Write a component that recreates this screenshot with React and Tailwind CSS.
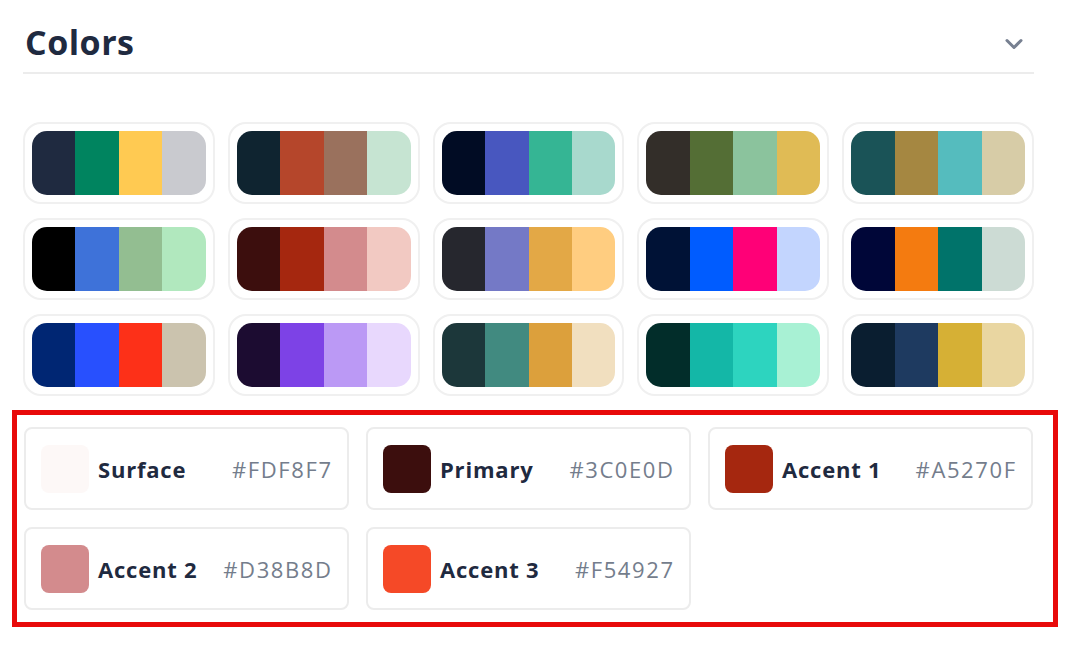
import React from "react";

const palettes = [
  ["#1f2a40", "#00845f", "#ffca52", "#c9cacf"],
  ["#0f2430", "#b5462b", "#9a715d", "#c6e4d2"],
  ["#010c24", "#4857bf", "#35b594", "#a8d9cd"],
  ["#332e29", "#546e35", "#8bc39d", "#e0bb55"],
  ["#1a5357", "#a58741", "#55bcbe", "#d7cca7"],
  ["#000000", "#3e72d9", "#93be91", "#b1e8be"],
  ["#3c0e0d", "#a5270f", "#d38b8d", "#f2c9c2"],
  ["#26272e", "#7479c6", "#e3a846", "#ffcd80"],
  ["#001236", "#005cff", "#ff0077", "#c3d5fe"],
  ["#000638", "#f47b10", "#00736a", "#ccdbd4"],
  ["#002673", "#2850fe", "#fd3018", "#cbc3ae"],
  ["#1c0c31", "#7d42e6", "#bb99f5", "#e8d8fd"],
  ["#1c373a", "#418a80", "#dca03c", "#f1dfbf"],
  ["#022d2a", "#14b7a7", "#2dd4bf", "#a8f1d4"],
  ["#0a1e30", "#1e3a60", "#d6b035", "#e9d6a1"],
];

const colors = [
  { name: "Surface", hex: "#FDF8F7" },
  { name: "Primary", hex: "#3C0E0D" },
  { name: "Accent 1", hex: "#A5270F" },
  { name: "Accent 2", hex: "#D38B8D" },
  { name: "Accent 3", hex: "#F54927" },
];

export default function App() {
  return (
    <div
      className="w-[1072px] h-[646px] bg-white overflow-hidden"
      style={{ fontFamily: "'Open Sans', 'Noto Sans', sans-serif" }}
    >
      <div className="ml-[23px] w-[1011px]">
        <div className="h-[74px] pt-[12px] border-b-2 border-[#ececec] flex items-center justify-between">
          <h1 className="text-[34px] font-bold text-[#1f2a40] leading-none ml-[2px] tracking-[0.5px]">Colors</h1>
          <svg
            width="28"
            height="28"
            viewBox="0 0 24 24"
            fill="none"
            stroke="#778091"
            strokeWidth="2.6"
            strokeLinecap="round"
            strokeLinejoin="round"
            className="mt-[4px] mr-[6px]"
          >
            <path d="M6 9l6 6 6-6" />
          </svg>
        </div>
        <div className="mt-[48px] grid grid-cols-5 gap-x-[13px] gap-y-[14px]">
          {palettes.map((p, i) => (
            <div
              key={i}
              className="h-[82px] rounded-[18px] border-2 border-[#f0f0f0] p-[7px]"
            >
              <div className="h-full w-full rounded-[15px] overflow-hidden flex">
                {p.map((c, j) => (
                  <div key={j} className="flex-1 h-full" style={{ backgroundColor: c }} />
                ))}
              </div>
            </div>
          ))}
        </div>
      </div>

      <div className="mt-[14px] ml-[12px] w-[1046px] border-[5px] border-[#e80a0a] pl-[7px] pt-[12px] pr-[20px] pb-[12px]">
        <div className="grid grid-cols-3 gap-[17px]">
          {colors.map((c) => (
            <div
              key={c.name}
              className="h-[83px] rounded-[8px] border-2 border-[#ececec] flex items-center pl-[15px] pr-[16px]"
            >
              <div
                className="w-[48px] h-[48px] rounded-[8px] shrink-0"
                style={{ backgroundColor: c.hex }}
              />
              <span className="ml-[9px] text-[22px] font-bold text-[#1f2a40] leading-none tracking-[0.8px]">{c.name}</span>
              <span className="ml-auto text-[22px] text-[#747d8c] leading-none tracking-[1.6px] -mr-[1.6px]">{c.hex}</span>
            </div>
          ))}
        </div>
      </div>
    </div>
  );
}
